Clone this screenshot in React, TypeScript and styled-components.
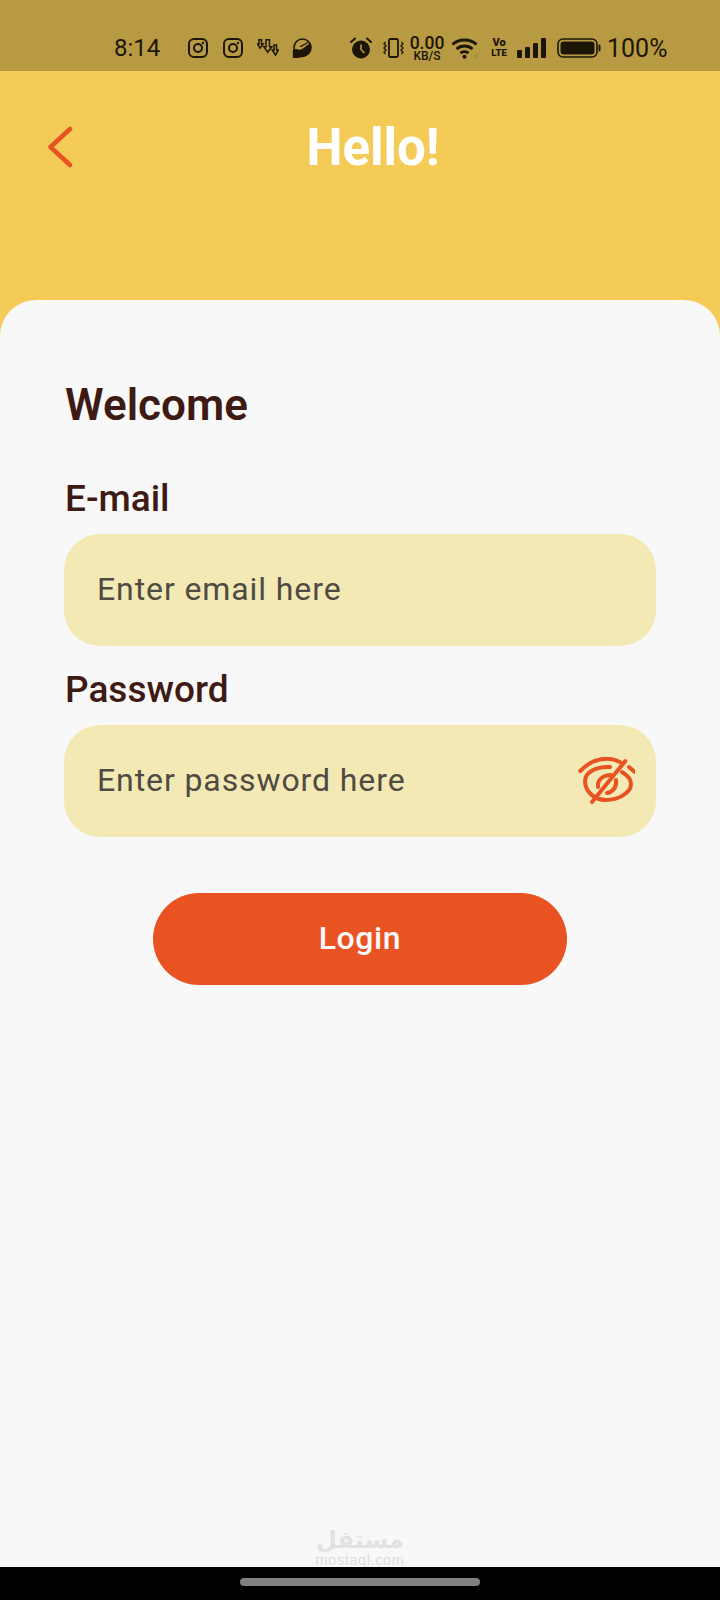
import React from "react";
import styled, { createGlobalStyle } from "styled-components";

const INK = "#1c1608";
const BAR = "#b89a42";

const Global = createGlobalStyle`
  html, body {
    margin: 0;
    padding: 0;
    background: #000;
  }
  * {
    box-sizing: border-box;
  }
`;

const Page = styled.div`
  width: 720px;
  height: 1600px;
  display: flex;
  flex-direction: column;
  font-family: Roboto, "Noto Sans", sans-serif;
  background: #f5cb58;
  overflow: hidden;
`;

const StatusBar = styled.div`
  height: 71px;
  flex: none;
  background: ${BAR};
  color: ${INK};
  display: flex;
  align-items: center;
  padding: 25px 0 0 114px;
`;

const Time = styled.span`
  width: 74px;
  font-size: 24px;
`;

const NotifyIcons = styled.div`
  display: flex;
  align-items: center;
  width: 162px;
  flex: none;
`;

const Slot = styled.span<{ $left?: number }>`
  display: flex;
  flex: none;
  margin-left: ${(p) => p.$left ?? 0}px;
`;

const Speed = styled.div`
  display: flex;
  flex-direction: column;
  align-items: center;
  width: 34px;
  margin: 0 0 0 6px;
  flex: none;
  .num {
    font-size: 17.5px;
    line-height: 14px;
    font-weight: 500;
  }
  .unit {
    margin-top: 1px;
    font-size: 12px;
    line-height: 10px;
    font-weight: 500;
  }
`;

const Lte = styled.div`
  width: 14px;
  margin-left: 14px;
  flex: none;
  font-size: 11px;
  line-height: 10.5px;
  font-weight: 900;
  text-align: center;
  white-space: nowrap;
  display: flex;
  flex-direction: column;
  align-items: center;
  .lte {
    font-size: 9.5px;
  }
`;

const Percent = styled.span`
  margin-left: 6px;
  font-size: 25px;
`;

const Header = styled.header`
  height: 229px;
  flex: none;
  display: flex;
  align-items: flex-start;
  padding: 32px 0 0 46px;
`;

const BackIcon = styled.svg`
  width: 28px;
  height: 42px;
  margin-top: 23px;
  flex: none;
`;

const Title = styled.h1`
  margin: 3px 0 0;
  width: 598px;
  text-align: center;
  color: #fff;
  font-size: 51px;
  line-height: 84px;
  font-weight: 700;
`;

const Card = styled.main`
  flex: 1;
  background: #f8f8f8;
  border-radius: 36px 36px 0 0;
  padding: 80px 64px 0 65px;
  display: flex;
  flex-direction: column;
  position: relative;
`;

const Welcome = styled.h2`
  margin: 0;
  color: #3e1a14;
  font-size: 44px;
  line-height: 50px;
  font-weight: 600;
`;

const Label = styled.label<{ $top: number }>`
  display: block;
  margin-top: ${(p) => p.$top}px;
  color: #3e1a14;
  font-size: 37px;
  line-height: 44px;
  font-weight: 500;
`;

const InputBox = styled.div`
  margin: 13px 0 0 -1px;
  height: 112px;
  background: #f3e9b5;
  border-radius: 36px;
  display: flex;
  align-items: center;
  justify-content: space-between;
  padding: 0 21px 0 33px;
  color: #4f4b43;
  font-size: 32px;
  letter-spacing: 0.9px;
`;

const Placeholder = styled.span`
  margin-bottom: 3px;
`;

const LoginButton = styled.button`
  align-self: center;
  margin: 56px 0 0 -1px;
  padding-bottom: 4px;
  width: 414px;
  height: 92px;
  border: 0;
  border-radius: 46px;
  background: #e95322;
  color: #f8f8f8;
  font-family: inherit;
  font-size: 32px;
  font-weight: 500;
  letter-spacing: 0.6px;
`;

const Watermark = styled.div`
  position: absolute;
  left: 0;
  right: 0;
  bottom: 33px;
  display: flex;
  flex-direction: column;
  align-items: center;
  color: #e2e2e2;
  pointer-events: none;
  .ar {
    font-family: "DejaVu Sans", sans-serif;
    font-weight: 700;
    font-size: 24px;
    line-height: 26px;
  }
  .en {
    color: #dedede;
    font-family: "Liberation Sans", sans-serif;
    font-size: 14.5px;
    line-height: 14px;
    letter-spacing: 0.6px;
  }
`;

const NavBar = styled.div`
  position: absolute;
  left: 0;
  right: 0;
  bottom: 0;
  height: 33px;
  background: #000;
  display: flex;
  justify-content: center;
  padding-top: 11px;
`;

const HomePill = styled.div`
  width: 240px;
  height: 8px;
  border-radius: 4px;
  background: #808080;
`;

function Instagram() {
  return (
    <svg width="20" height="20" viewBox="0 0 20 20" fill="none" stroke={INK} strokeWidth="2">
      <rect x="1" y="1" width="18" height="18" rx="5" />
      <circle cx="10" cy="10" r="4" />
      <circle cx="15" cy="5" r="1.2" fill={INK} stroke="none" />
    </svg>
  );
}

function DownloadArrows() {
  return (
    <svg width="22" height="18" viewBox="0 0 22 18" fill="none" stroke={INK} strokeWidth="1.5">
      <path d="M2 .8h2.500v4.200h1.700L3.200 9.200.5 5h1.500z" />
      <path d="M9 .8h3.500v7h2.300l-4 5.500-4-5.500H9z" />
      <path d="M17 6h2.500v5h2l-3 5-3.300-5H17z" />
    </svg>
  );
}

function ChatBlob() {
  return (
    <svg width="20" height="20" viewBox="0 0 20 20">
      <circle cx="10.500" cy="9.500" r="8.500" fill="none" stroke={INK} strokeWidth="1.600" />
      <path d="M.8 20v-8c3-2.500 5 .5 8-.5s5-4 9-6c2.500 5 .5 10.500-3.500 12.500C11 19.500 6 20 .8 20z" fill={INK} />
      <path d="M8 8.500c3-.5 5-3 8-4" fill="none" stroke={INK} strokeWidth="1.200" />
    </svg>
  );
}

function Alarm() {
  return (
    <svg width="22" height="22" viewBox="0 0 22 22">
      <circle cx="11" cy="12.500" r="9" fill={INK} />
      <path d="M1 5l4-3.500M21 5l-4-3.500" stroke={INK} strokeWidth="2" strokeLinecap="round" />
      <path d="M11 7.500v5l3.500 3.500" fill="none" stroke={BAR} strokeWidth="1.600" />
    </svg>
  );
}

function Vibrate() {
  return (
    <svg width="21" height="20" viewBox="0 0 21 20" fill="none" stroke={INK}>
      <rect x="6" y="1" width="9" height="18" rx="1.500" strokeWidth="1.800" />
      <path d="M2.500 4L1 6l2 2-2 2 2 2-2 2 1.500 2" strokeWidth="1.300" />
      <path d="M18.500 4L20 6l-2 2 2 2-2 2 2 2-1.500 2" strokeWidth="1.300" />
    </svg>
  );
}

function Wifi() {
  return (
    <svg width="27" height="22" viewBox="0 0 27 22" fill="none" stroke={INK} strokeWidth="3">
      <path d="M1.500 7.500c6.500-6 17.500-6 24 0" />
      <path d="M5.500 12c4.500-4 11.500-4 16 0" />
      <path d="M9.500 16c2.300-1.800 5.700-1.800 8 0" />
      <circle cx="13.500" cy="19.800" r="2" fill={INK} stroke="none" />
      <path d="M22 18h5l-2.500 3z" fill="#a58a3c" stroke="none" />
    </svg>
  );
}

function Signal() {
  return (
    <svg width="29" height="20" viewBox="0 0 29 20" fill={INK}>
      <rect x="0" y="12" width="5" height="8" rx="1" />
      <rect x="8" y="9" width="5" height="11" rx="1" />
      <rect x="16" y="5" width="5" height="15" rx="1" />
      <rect x="24" y="0" width="5" height="20" rx="1" />
    </svg>
  );
}

function Battery() {
  return (
    <svg width="44" height="20" viewBox="0 0 44 20">
      <rect x="1" y="1" width="39" height="18" rx="5" fill="none" stroke={INK} strokeWidth="1.600" />
      <rect x="3.500" y="3.500" width="34" height="13" rx="3" fill={INK} />
      <rect x="41.500" y="6.500" width="2" height="7" rx="1" fill={INK} />
    </svg>
  );
}

function EyeOff() {
  return (
    <svg width="58" height="48" viewBox="0 0 58 48" fill="none" stroke="#e95322" strokeWidth="4" strokeLinecap="round">
      <path d="M3.300 14C11 6 20 1.700 30 1.700c6 0 11 1.800 16 5M52 10l5.700 5" />
      <path d="M33 10C20 9 8 15 8 24c0 11 10 19 21 19 12 0 25-7 25-16 0-5-4-9-9-12" />
      <path d="M21 30c-1-7 5-12 13-12" />
      <path d="M30 36c6-1 10-6 9-13" />
      <path d="M48.300 4L15 45" />
    </svg>
  );
}

export default function App() {
  return (
    <>
      <Global />
      <Page>
        <StatusBar>
          <Time>8:14</Time>
          <NotifyIcons>
            <Slot>
              <Instagram />
            </Slot>
            <Slot $left={15}>
              <Instagram />
            </Slot>
            <Slot $left={14}>
              <DownloadArrows />
            </Slot>
            <Slot $left={13}>
              <ChatBlob />
            </Slot>
          </NotifyIcons>
          <Slot>
            <Alarm />
          </Slot>
          <Slot $left={11}>
            <Vibrate />
          </Slot>
          <Speed>
            <span className="num">0.00</span>
            <span className="unit">KB/S</span>
          </Speed>
          <Slot $left={7}>
            <Wifi />
          </Slot>
          <Lte>
            <span>Vo</span>
            <span className="lte">LTE</span>
          </Lte>
          <Slot $left={11}>
            <Signal />
          </Slot>
          <Slot $left={11}>
            <Battery />
          </Slot>
          <Percent>100%</Percent>
        </StatusBar>
        <Header>
          <BackIcon viewBox="0 0 28 42" fill="none" stroke="#e95322" strokeWidth="4.500" strokeLinecap="round" strokeLinejoin="round">
            <path d="M24 3L4.500 21 24 39" />
          </BackIcon>
          <Title>Hello!</Title>
        </Header>
        <Card>
          <Welcome>Welcome</Welcome>
          <Label $top={47}>E-mail</Label>
          <InputBox>
            <Placeholder>Enter email here</Placeholder>
          </InputBox>
          <Label $top={22}>Password</Label>
          <InputBox>
            <Placeholder>Enter password here</Placeholder>
            <EyeOff />
          </InputBox>
          <LoginButton>Login</LoginButton>
          <Watermark>
            <span className="ar">مستقل</span>
            <span className="en">mostaql.com</span>
          </Watermark>
          <NavBar>
            <HomePill />
          </NavBar>
        </Card>
      </Page>
    </>
  );
}
